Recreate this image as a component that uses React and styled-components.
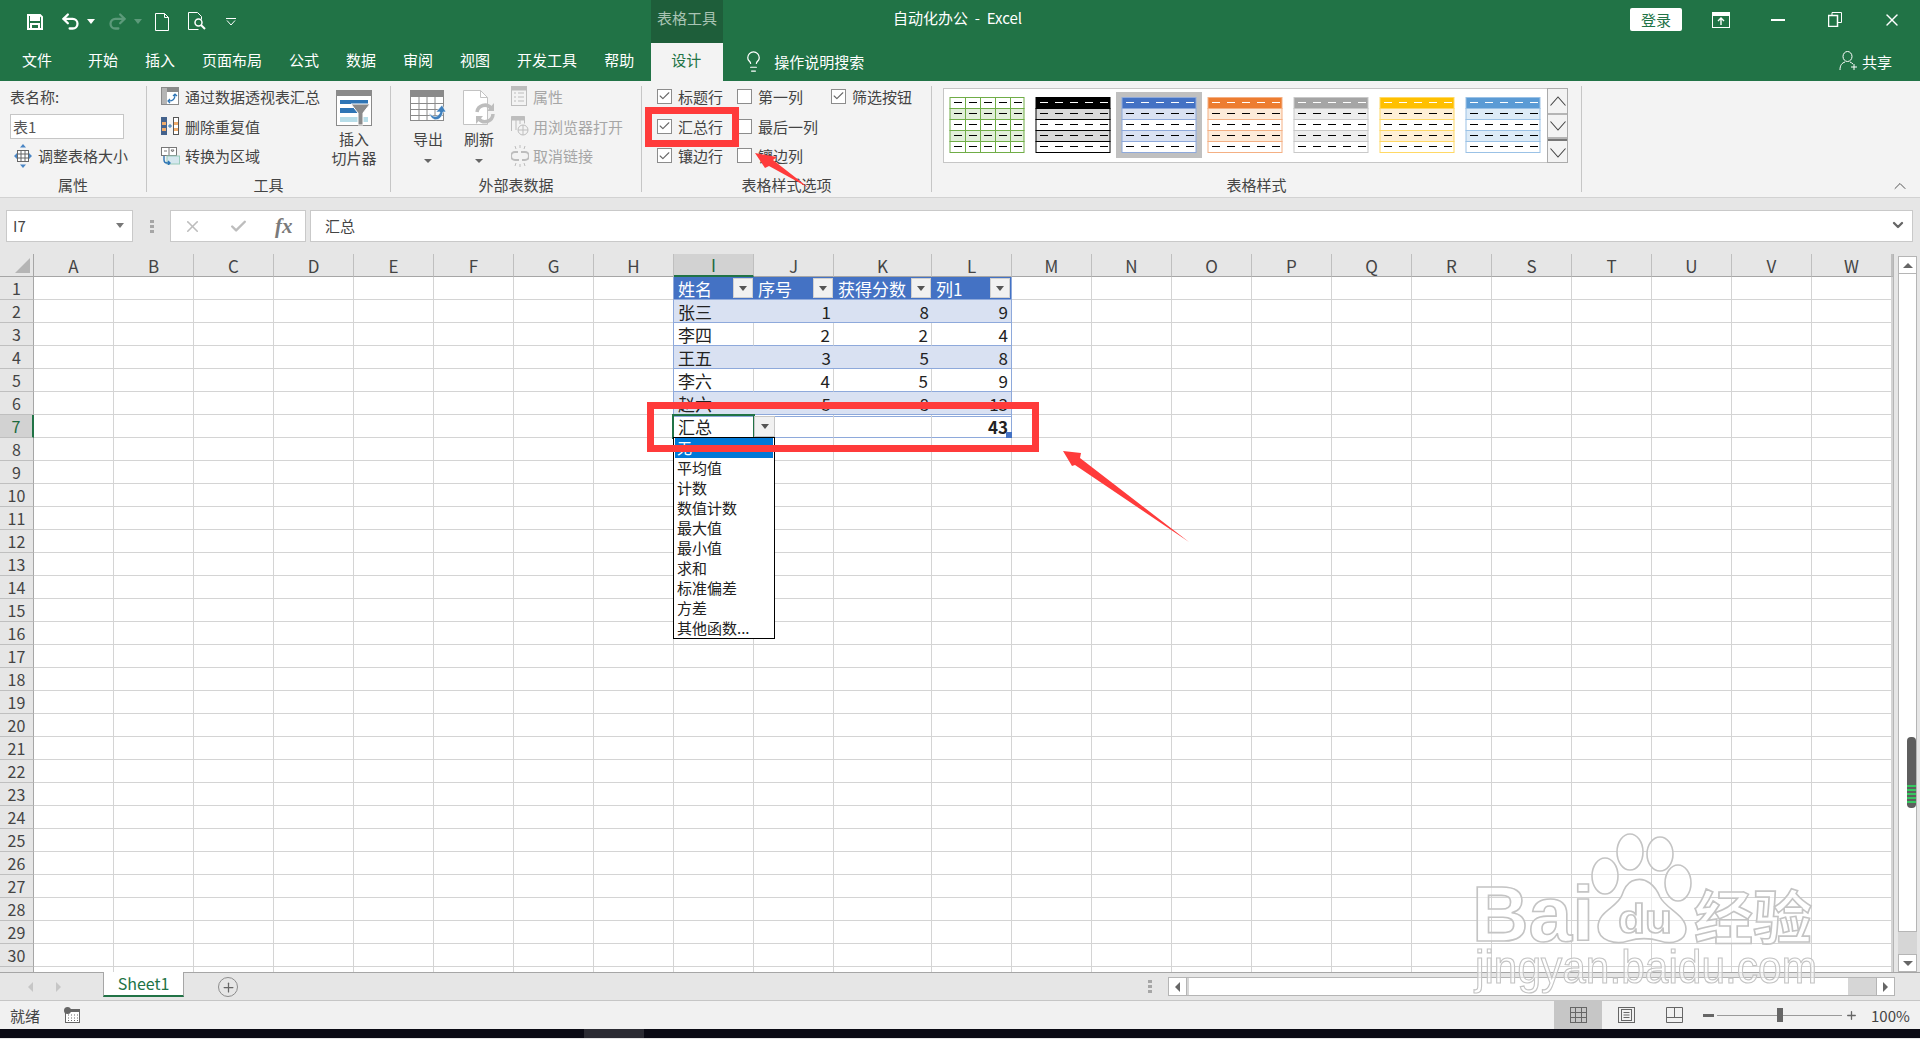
import React from 'react';
import styled, { createGlobalStyle, css } from 'styled-components';
import { Undo2, Redo2, Lightbulb, X, Check, ChevronUp, ChevronDown, Plus } from 'lucide-react';

const GREEN = '#217346';
const FONT = '"Noto Sans CJK SC", "Noto Sans", sans-serif';

const GlobalStyle = createGlobalStyle`
  html, body {
    margin: 0;
    padding: 0;
    width: 1920px;
    height: 1039px;
    overflow: hidden;
    background: #e6e6e6;
  }
  body {
    font-family: ${FONT};
    font-size: 15px;
    color: #444;
  }
  * { box-sizing: border-box; }
`;

const Page = styled.div`
  position: relative;
  width: 1920px;
  height: 1039px;
  display: flex;
  flex-direction: column;
  overflow: hidden;
`;

/* title bar */
const TitleBar = styled.div`
  display: flex;
  align-items: center;
  height: 43px;
  background: ${GREEN};
  color: #fff;
`;

const QuickAccess = styled.div`
  display: flex;
  align-items: center;
  width: 651px;
  height: 43px;
  padding-left: 27px;
  flex: none;
`;

const QuickIcon = styled.span`
  display: flex;
  align-items: center;
  margin-left: ${p => p.$gap || 0}px;
  color: ${p => (p.$dim ? '#5c9a7a' : '#fff')};
`;

const ContextTab = styled.div`
  width: 72px;
  height: 43px;
  flex: none;
  background: #1e5e3a;
  color: #a9c4b4;
  line-height: 36px;
  text-align: center;
`;

const WindowTitle = styled.div`
  margin-left: 170px;
  white-space: pre;
  line-height: 35px;
  height: 43px;
`;

const WindowControls = styled.div`
  margin-left: auto;
  display: flex;
  align-items: center;
  height: 43px;
`;

const LoginButton = styled.div`
  width: 52px;
  height: 23px;
  margin-right: 10px;
  margin-top: -4px;
  border-radius: 2px;
  background: #fff;
  color: ${GREEN};
  text-align: center;
  line-height: 23px;
`;

const WindowButton = styled.div`
  width: 57px;
  display: flex;
  justify-content: center;
  margin-top: -4px;
`;

/* ribbon tabs */
const TabBar = styled.div`
  display: flex;
  align-items: stretch;
  height: 38px;
  background: ${GREEN};
  color: #fff;
`;

const FileTab = styled.div`
  width: 74px;
  text-align: center;
  line-height: 34px;
`;

const TabList = styled.div`
  display: flex;
  gap: 27px;
  margin-left: 14px;
  line-height: 34px;
`;

const DesignTab = styled.div`
  width: 72px;
  margin-left: 17px;
  padding-right: 2px;
  background: #f3f3f3;
  color: ${GREEN};
  text-align: center;
  line-height: 34px;
`;

const SearchHint = styled.div`
  display: flex;
  align-items: center;
  gap: 9px;
  margin-left: 19px;
  height: 36px;
`;

const ShareButton = styled.div`
  margin-left: auto;
  margin-right: 28px;
  display: flex;
  align-items: center;
  gap: 3px;
  height: 36px;
`;

/* ribbon */
const Ribbon = styled.div`
  display: flex;
  position: relative;
  height: 117px;
  background: #f3f3f3;
  border-bottom: 1px solid #d2d2d2;
`;

const Group = styled.div`
  width: ${p => p.$width}px;
  flex: none;
  display: flex;
  flex-direction: column;
`;

const GroupBody = styled.div`
  height: 93px;
  display: flex;
  padding-left: ${p => p.$pad || 0}px;
`;

const GroupLabel = styled.div`
  height: 22px;
  line-height: 21px;
  text-align: center;
  color: #444;
  font-size: 15px;
`;

const GroupDivider = styled.div`
  width: 1px;
  height: 106px;
  margin-top: 5px;
  flex: none;
  background: #c6c6c6;
`;

const CommandList = styled.div`
  display: grid;
  grid-template-rows: 30px 30px 29px;
  width: ${p => p.$width}px;
  flex: none;
`;

const Command = styled.div`
  display: flex;
  align-items: center;
  gap: ${p => p.$gap ?? 6}px;
  white-space: nowrap;
  color: ${p => (p.$disabled ? '#a6a6a6' : '#444')};
  padding-left: ${p => p.$pad || 0}px;
`;

const NameInput = styled.div`
  align-self: center;
  width: 114px;
  height: 25px;
  background: #fff;
  border: 1px solid #c6c6c6;
  padding-left: 2px;
  line-height: 23px;
  color: #555;
`;

const LargeCommand = styled.div`
  width: ${p => p.$width || 50}px;
  margin-right: ${p => p.$after || 0}px;
  flex: none;
  display: flex;
  flex-direction: column;
  align-items: center;
  padding-top: 9px;
  line-height: 19px;
  text-align: center;
  color: #444;
  svg { margin-bottom: 3px; flex: none; }
`;

const CaretDown = styled.span`
  width: 0;
  height: 0;
  margin-top: 11px;
  border-left: 4px solid transparent;
  border-right: 4px solid transparent;
  border-top: 4px solid #666;
`;

const OptionsGrid = styled.div`
  display: grid;
  grid-template-columns: 80px 94px 90px;
  grid-template-rows: 30px 30px 29px;
`;

const Option = styled.label`
  display: flex;
  align-items: center;
  gap: 6px;
  white-space: nowrap;
`;

const CheckBox = styled.span`
  width: 15px;
  height: 15px;
  flex: none;
  display: flex;
  align-items: center;
  justify-content: center;
  background: #fff;
  border: 1px solid #8c8c8c;
  color: #666;
`;

const Gallery = styled.div`
  display: flex;
  width: 604px;
  height: 75px;
  margin: 7px 0 0 11px;
  padding: 3px 0 0 0;
  background: #fff;
  border: 1px solid #c6c6c6;
  border-right: none;
  flex: none;
`;

const Swatch = styled.div`
  width: 86px;
  height: 66px;
  padding: 5px;
  background: ${p => (p.$selected ? '#c0c0c0' : 'transparent')};
  svg { display: block; }
`;

const GalleryScroll = styled.div`
  width: 21px;
  height: 75px;
  margin-top: 7px;
  display: grid;
  grid-template-rows: 26px 24px 25px;
  border: 1px solid #ababab;
  flex: none;
`;

const GalleryButton = styled.div`
  display: flex;
  align-items: center;
  justify-content: center;
  color: #444;
  border-bottom: ${p => (p.$line ? `2px solid ${p.$line}` : 'none')};
  border-top: ${p => (p.$topLine ? `2px solid ${p.$topLine}` : 'none')};
`;

const CollapseRibbon = styled.div`
  position: absolute;
  right: 10px;
  bottom: 1px;
  color: #555;
  display: flex;
`;

/* formula bar */
const FormulaBar = styled.div`
  display: flex;
  height: 56px;
  padding: 12px 0 0 6px;
  background: #e6e6e6;
`;

const BarBox = styled.div`
  height: 32px;
  display: flex;
  align-items: center;
  background: #fff;
  border: 1px solid #c9c9c9;
  flex: none;
`;

const NameBox = styled(BarBox)`
  width: 127px;
  padding: 0 8px 2px 6px;
  justify-content: space-between;
  color: #444;
`;

const SmallCaret = styled.span`
  width: 0;
  height: 0;
  border-left: 4px solid transparent;
  border-right: 4px solid transparent;
  border-top: 5px solid ${p => p.$color || '#777'};
`;

const BarDots = styled.div`
  width: 37px;
  display: flex;
  flex-direction: column;
  align-items: center;
  justify-content: center;
  gap: 2px;
  flex: none;
  height: 32px;
  span { width: 4px; height: 3px; background: #a6a6a6; }
`;

const FormulaButtons = styled(BarBox)`
  width: 136px;
  gap: 27px;
  padding-left: 12px;
  color: #bdbdbd;
`;

const Fx = styled.span`
  font-family: "Liberation Serif", serif;
  font-style: italic;
  font-weight: 700;
  font-size: 21px;
  line-height: 24px;
  color: #7a7a7a;
`;

const FormulaInput = styled(BarBox)`
  width: 1603px;
  margin-left: 4px;
  padding: 0 6px 2px 14px;
  justify-content: space-between;
`;

/* sheet */
const SheetArea = styled.div`
  display: flex;
  height: 719px;
  background: #e6e6e6;
  border-bottom: 1px solid #a6a6a6;
  overflow: hidden;
`;

const SheetGrid = styled.div`
  width: 1894px;
  flex: none;
  background: #fff;
  border-right: 1px solid #b5b5b5;
`;

const GridRow = styled.div`
  display: grid;
  grid-template-columns: 34px repeat(10, 80px) 98px repeat(12, 80px) 1px;
  grid-template-rows: 23px;
  height: 23px;
`;

const headerCell = css`
  display: flex;
  align-items: center;
  justify-content: center;
  background: ${p => (p.$active ? '#d2d2d2' : '#e6e6e6')};
  color: ${p => (p.$active ? '#1c6a3e' : '#444')};
  font-size: 16px;
  min-height: 0;
`;

const ColumnHeader = styled.div`
  ${headerCell}
  position: relative;
  font-size: 17px;
  border-right: 1px solid #bfbfbf;
  border-bottom: ${p => (p.$active ? `2px solid ${GREEN}` : '1px solid #a6a6a6')};
`;

const CornerCell = styled.div`
  background: #e6e6e6;
  border-right: 1px solid #a6a6a6;
  border-bottom: 1px solid #a6a6a6;
  display: flex;
  align-items: flex-end;
  justify-content: flex-end;
  padding: 0 3px 3px 0;
  &::before {
    content: '';
    width: 15px;
    height: 15px;
    background: #b5b5b5;
    clip-path: polygon(100% 0, 100% 100%, 0 100%);
  }
`;

const RowHeader = styled.div`
  ${headerCell}
  border-right: ${p => (p.$active ? `2px solid ${GREEN}` : '1px solid #a6a6a6')};
  border-bottom: 1px solid #bfbfbf;
`;

const Cell = styled.div`
  position: relative;
  border-right: 1px solid #d4d4d4;
  border-bottom: 1px solid #d4d4d4;
`;

const TableCell = styled.div`
  position: relative;
  display: flex;
  align-items: center;
  min-height: 0;
  padding: 0 3px 0 4px;
  font-size: 17px;
  white-space: nowrap;
  justify-content: ${p => (p.$num ? 'flex-end' : 'flex-start')};
  color: #222;
  border-bottom: 1px solid #8ea9db;
  ${p => p.$first && 'border-left: 1px solid #8ea9db; margin-left: -1px;'}
  ${p => p.$last && 'border-right: 1px solid #8ea9db;'}
  ${p => p.$variant === 'head' && css`
    background: #4472c4;
    color: #fff;
    padding: 0 1px 0 4px;
  `}
  ${p => p.$variant === 'band' && 'background: #d9e1f2;'}
  ${p => p.$variant === 'plain' && css`
    background: #fff;
    ${!p.$last && 'border-right: 1px solid #d4d4d4;'}
  `}
  ${p => p.$variant === 'total' && css`
    background: #fff;
    box-shadow: inset 0 1px 0 #fff, inset 0 2px 0 #8ea9db;
    ${!p.$last && 'border-right: 1px solid #d4d4d4;'}
  `}
  ${p => p.$selected && css`
    outline: 2px solid ${GREEN};
    outline-offset: -1px;
    z-index: 3;
  `}
`;

const FilterButton = styled.span`
  margin-left: auto;
  width: 20px;
  height: 20px;
  flex: none;
  display: flex;
  align-items: center;
  justify-content: center;
  background: #f1f1f1;
  border: 1px solid #d0d0d0;
`;

const CellDropButton = styled.span`
  position: absolute;
  left: 100%;
  top: 1px;
  margin-left: 1px;
  width: 21px;
  height: 21px;
  display: flex;
  align-items: center;
  justify-content: center;
  background: #f1f1f1;
  border: 1px solid #c6c6c6;
`;

const TotalMenu = styled.div`
  position: absolute;
  top: 22px;
  left: -1px;
  width: 102px;
  padding: 0 1px;
  background: #fff;
  border: 1px solid #000;
  z-index: 4;
`;

const TotalMenuItem = styled.div`
  height: 20px;
  line-height: 20px;
  padding-left: 2px;
  font-size: 15px;
  background: ${p => (p.$selected ? '#0078d7' : 'transparent')};
  color: ${p => (p.$selected ? '#fff' : '#222')};
`;

const FillHandle = styled.span`
  position: absolute;
  right: -1px;
  bottom: -1px;
  width: 6px;
  height: 6px;
  background: #4472c4;
`;

const ScrollColumn = styled.div`
  width: 19px;
  margin-left: 4px;
  flex: none;
  display: flex;
  flex-direction: column;
  padding-top: 2px;
`;

const ScrollButton = styled.div`
  height: ${p => p.$h || 18}px;
  display: flex;
  align-items: center;
  justify-content: center;
  flex: none;
  background: #fff;
  border: 1px solid #b5b5b5;
`;

const ScrollTrack = styled.div`
  flex: 1;
  background: #d6d6d6;
`;

const ScrollThumb = styled.div`
  position: relative;
  height: 658px;
  background: #fff;
  border: 1px solid #b5b5b5;
  border-top: none;
`;

const ScrollGap = styled.div`
  flex: 1;
  background: #d6d6d6;
`;

const PhoneMark = styled.div`
  position: absolute;
  right: 0;
  top: 463px;
  width: 9px;
  height: 71px;
  border-radius: 4px;
  background: #5e5e5e;
  padding-top: 48px;
  &::after {
    content: '';
    display: block;
    height: 20px;
    background: repeating-linear-gradient(to bottom, #35c75f 0 2px, #5e5e5e 2px 4px);
  }
`;

const Triangle = styled.span`
  width: 0;
  height: 0;
  ${p => p.$dir === 'up' && 'border-left: 5px solid transparent; border-right: 5px solid transparent; border-bottom: 5px solid #666;'}
  ${p => p.$dir === 'down' && 'border-left: 5px solid transparent; border-right: 5px solid transparent; border-top: 5px solid #666;'}
  ${p => p.$dir === 'left' && `border-top: 5px solid transparent; border-bottom: 5px solid transparent; border-right: 5px solid ${p.$color || '#666'};`}
  ${p => p.$dir === 'right' && `border-top: 5px solid transparent; border-bottom: 5px solid transparent; border-left: 5px solid ${p.$color || '#666'};`}
`;

/* sheet tabs */
const SheetBar = styled.div`
  display: flex;
  align-items: flex-start;
  height: 28px;
  background: #e6e6e6;
  border-bottom: 1px solid #c6c6c6;
`;

const SheetNav = styled.div`
  width: 103px;
  height: 27px;
  display: flex;
  align-items: center;
  gap: 23px;
  padding-left: 28px;
  flex: none;
`;

const SheetTab = styled.div`
  width: 81px;
  height: 25px;
  margin-top: -1px;
  background: #fff;
  border: 1px solid #a6a6a6;
  border-top: none;
  border-bottom: 2px solid ${GREEN};
  color: ${GREEN};
  font-size: 16px;
  text-align: center;
  line-height: 23px;
`;

const AddSheet = styled.div`
  width: 20px;
  height: 20px;
  margin: 4px 0 0 34px;
  border: 1px solid #8c8c8c;
  border-radius: 50%;
  display: flex;
  align-items: center;
  justify-content: center;
  color: #666;
`;

const HScrollDots = styled(BarDots)`
  margin-left: auto;
  height: 27px;
  width: 36px;
`;

const HScroll = styled.div`
  display: flex;
  width: 727px;
  height: 19px;
  margin: 4px 25px 0 0;
  flex: none;
  border: 1px solid #b5b5b5;
  background: #d6d6d6;
`;

const HScrollEnd = styled.div`
  width: 18px;
  flex: none;
  display: flex;
  align-items: center;
  justify-content: center;
  background: #fff;
  border-${p => p.$side}: 1px solid #b5b5b5;
`;

const HScrollThumb = styled.div`
  width: 659px;
  margin-left: 2px;
  background: #fff;
`;

/* status bar */
const StatusBar = styled.div`
  display: flex;
  align-items: center;
  height: 28px;
  padding-left: 10px;
  background: #f1f1f1;
  color: #444;
`;

const StatusMacro = styled.span`
  margin-left: 24px;
  display: flex;
`;

const ViewButtons = styled.div`
  margin-left: auto;
  display: flex;
  height: 28px;
  color: #666;
`;

const ViewButton = styled.div`
  width: 48px;
  display: flex;
  align-items: center;
  justify-content: center;
  background: ${p => (p.$active ? '#c6c6c6' : 'transparent')};
`;

const Zoom = styled.div`
  display: flex;
  align-items: center;
  width: 222px;
  padding-left: 5px;
  color: #666;
  flex: none;
`;

const ZoomTrack = styled.div`
  position: relative;
  width: 125px;
  height: 1px;
  margin: 0 3px;
  background: #9a9a9a;
`;

const ZoomThumb = styled.span`
  position: absolute;
  left: 60px;
  top: -7px;
  width: 6px;
  height: 14px;
  background: #666;
`;

const ZoomValue = styled.span`
  margin-left: 13px;
  color: #444;
`;

const Taskbar = styled.div`
  display: flex;
  height: 9px;
  background: #0a0a14;
  overflow: hidden;
`;

const TaskbarItem = styled.div`
  width: 60px;
  margin-left: 584px;
  background: #2b2b33;
`;

const TaskbarClock = styled.div`
  margin-left: 1151px;
  padding-top: 6px;
  color: #fff;
  font-size: 13px;
  line-height: 16px;
`;

/* annotations laid over the screenshot */
const TableMark = styled.div`
  position: absolute;
  left: 647px;
  top: 402px;
  width: 392px;
  height: 50px;
  border: 7px solid #ff3b3b;
  z-index: 6;
`;

const RibbonMark = styled.div`
  position: absolute;
  left: 645px;
  top: 107px;
  width: 94px;
  height: 40px;
  border: 7px solid #ff3b3b;
  z-index: 6;
`;

const ArrowLayer = styled.svg`
  position: absolute;
  left: 0;
  top: 0;
  z-index: 6;
  pointer-events: none;
`;

const Watermark = styled.svg`
  position: absolute;
  left: 1460px;
  top: 825px;
  z-index: 7;
  pointer-events: none;
`;

const COLUMNS = 'ABCDEFGHIJKLMNOPQRSTUVW'.split('');
const ROWS = Array.from({ length: 31 }, (_, i) => i + 1);

const TABLE_START = 8;
const TABLE_END = 11;
const TABLE_ROWS = {
  1: { variant: 'head', cells: ['姓名', '序号', '获得分数', '列1'] },
  2: { variant: 'band', cells: ['张三', 1, 8, 9] },
  3: { variant: 'plain', cells: ['李四', 2, 2, 4] },
  4: { variant: 'band', cells: ['王五', 3, 5, 8] },
  5: { variant: 'plain', cells: ['李六', 4, 5, 9] },
  6: { variant: 'band', cells: ['赵六', 5, 8, 13] },
  7: { variant: 'total', cells: ['汇总', '', '', '43'] },
};

const TOTAL_OPTIONS = ['无', '平均值', '计数', '数值计数', '最大值', '最小值', '求和', '标准偏差', '方差', '其他函数...'];

const SWATCHES = [
  { head: '#fff', band: '#e2efda', line: '#70ad47', grid: true },
  { head: '#000', band: '#d9d9d9', line: '#000' },
  { head: '#4472c4', band: '#d9e1f2', line: '#8ea9db', selected: true },
  { head: '#ed7d31', band: '#fdebd9', line: '#f4b084' },
  { head: '#a5a5a5', band: '#ededed', line: '#c9c9c9' },
  { head: '#ffc000', band: '#fff0d6', line: '#ffd966' },
  { head: '#5b9bd5', band: '#ddebf7', line: '#9bc2e6' },
];

const SwatchIcon = ({ head, band, line, grid }) => (
  <svg width="76" height="56" viewBox="0 0 76 56">
    {[0, 1, 2, 3, 4].map(r => (
      <g key={r}>
        <rect x="1" y={r * 11 + 0.5} width="74" height="11" fill={r === 0 ? head : r % 2 ? band : '#fff'} stroke={line} />
        {[0, 1, 2, 3, 4].map(c => (
          <rect key={c} x={c * 15 + 5} y={r * 11 + 5} width="8" height="1" fill={r === 0 && head !== '#fff' ? '#fff' : '#000'} />
        ))}
      </g>
    ))}
    {grid && [16, 31, 46, 61].map(x => <rect key={x} x={x} y="0" width="1" height="56" fill={line} />)}
  </svg>
);

const GalleryChevron = ({ up }) => (
  <svg width="16" height="10" viewBox="0 0 16 10" fill="none" stroke="#444" strokeWidth="1.100">
    <path d={up ? 'M.5 9.500L8 1l7.500 8.500' : 'M.5.500L8 9l7.500-8.500'} />
  </svg>
);

const SaveIcon = () => (
  <svg width="16" height="16" viewBox="0 0 16 16" fill="none" stroke="#fff" strokeWidth="2">
    <path d="M1 1h12l2 2v12H1z" />
    <path d="M4 1v5h8V1" fill="#fff" />
    <path d="M4 15v-5h8v5" />
  </svg>
);

const NewFileIcon = () => (
  <svg width="16" height="18" viewBox="0 0 16 18" fill="none" stroke="#fff">
    <path d="M1.500.5h9l4 4v13h-13z" />
    <path d="M10.500.5v4h4" />
  </svg>
);

const PreviewIcon = () => (
  <svg width="20" height="19" viewBox="0 0 20 19" fill="none" stroke="#fff">
    <path d="M1.500.5h9l4 4v3M1.500.5v17h10" />
    <circle cx="11.500" cy="10.500" r="3.500" strokeWidth="1.500" />
    <path d="M14 13l4 4" strokeWidth="2" />
  </svg>
);

const CustomizeIcon = () => (
  <svg width="10" height="8" viewBox="0 0 10 8" fill="none" stroke="#fff">
    <path d="M0 .5h10M1 2.500l4 4.500 4-4.500" />
  </svg>
);

const RibbonDisplayIcon = () => (
  <svg width="18" height="16" viewBox="0 0 18 16" fill="none" stroke="#fff">
    <rect x=".5" y=".5" width="17" height="15" />
    <rect x=".5" y=".5" width="17" height="3" fill="#fff" />
    <path d="M9 13V6M6 9l3-3 3 3" strokeWidth="1.400" />
  </svg>
);

const RestoreIcon = () => (
  <svg width="14" height="15" viewBox="0 0 14 15" fill="none" stroke="#fff">
    <rect x=".5" y="3.500" width="9" height="11" strokeWidth="1.500" />
    <path d="M4 3V.5h9.500v10H10" />
  </svg>
);

const ShareIcon = () => (
  <svg width="20" height="20" viewBox="0 0 20 20" fill="none" stroke="#fff">
    <ellipse cx="8.500" cy="5.500" rx="4.500" ry="5" />
    <path d="M1 19c0-5 2-7 5-8M11 11c1 .5 2 1 3 2" />
    <path d="M15 13v6M12 16h6" />
  </svg>
);

const PivotIcon = () => (
  <svg width="18" height="18" viewBox="0 0 18 18">
    <rect x=".5" y=".5" width="17" height="17" fill="#fff" stroke="#8a8a8a" />
    <rect x="1" y="1" width="16" height="4" fill="#8a8a8a" />
    <rect x="1" y="1" width="5" height="16" fill="#b5b5b5" />
    <path d="M8 14c4 0 6-2 6-6M12 9l2-2 2 2M9 12l-2 2 2 2" fill="none" stroke="#2f75b5" strokeWidth="1.200" />
  </svg>
);

const DuplicatesIcon = () => (
  <svg width="18" height="18" viewBox="0 0 18 18">
    <rect x="0" y="0" width="6" height="18" fill="#44628c" />
    <rect x="1" y="5" width="4" height="3" fill="#f0ab6a" />
    <rect x="1" y="11" width="4" height="3" fill="#f0ab6a" />
    <rect x="12.500" y=".5" width="5" height="17" fill="#fff" stroke="#555" />
    <rect x="13" y="5" width="4" height="3" fill="#f0ab6a" />
    <rect x="13" y="11" width="4" height="3" fill="#f0ab6a" />
    <path d="M7 9h4M9 7v4" stroke="#2f75b5" />
  </svg>
);

const ConvertIcon = () => (
  <svg width="19" height="18" viewBox="0 0 19 18" fill="none">
    <rect x=".5" y=".5" width="15" height="8" fill="#fff" stroke="#777" />
    <path d="M8 .5v8" stroke="#777" />
    <path d="M3 4h3M10 3l1.500 2 1.500-2z" stroke="#777" />
    <rect x="6" y="9" width="12.500" height="8" fill="#d5e7ee" stroke="#9cb" />
    <path d="M3 9v4c0 2 1 3 3 3h3M7 14l2 2-2 2" stroke="#2f75b5" strokeWidth="1.400" />
  </svg>
);

const ResizeIcon = () => (
  <svg width="18" height="24" viewBox="0 0 18 24">
    <rect x="3.500" y="6.500" width="11" height="11" fill="#fff" stroke="#666" />
    <path d="M3.500 10h11M3.500 14h11M7 6.500v11M11 6.500v11" stroke="#666" />
    <path d="M9 0l3 3.500H6zM9 24l3-3.500H6zM0 12l3-3v6zM18 12l-3-3v6z" fill="#4a86c5" />
  </svg>
);

const SlicerIcon = () => (
  <svg width="36" height="36" viewBox="0 0 36 36">
    <rect x=".5" y=".5" width="35" height="35" fill="#fff" stroke="#8a8a8a" />
    <rect x="0" y="0" width="36" height="6" fill="#8a8a8a" />
    <rect x="4" y="10" width="28" height="4" fill="#2f75b5" />
    <rect x="4" y="18" width="20" height="5" fill="#2f75b5" />
    <rect x="4" y="27" width="28" height="5" fill="#b7dde8" />
    <path d="M15 14h19l-7 9v12h-5V23z" fill="#8a8a8a" stroke="#fff" />
  </svg>
);

const ExportIcon = () => (
  <svg width="36" height="36" viewBox="0 0 36 36">
    <rect x=".5" y=".5" width="33" height="30" fill="#fff" stroke="#8a8a8a" />
    <rect x="0" y="0" width="34" height="7" fill="#8a8a8a" />
    <path d="M0 13.500h34M0 19.500h34M0 25.500h34M9 7v24M17 7v24M25 7v24" stroke="#8a8a8a" />
    <path d="M19 23c6 6 10 3 11-1l-4 0 6-7 4 7h-3c-1 8-10 12-14 1z" fill="#3f80bd" stroke="#fff" strokeWidth=".6" />
  </svg>
);

const RefreshIcon = () => (
  <svg width="34" height="36" viewBox="0 0 34 36">
    <path d="M1.500.5h17l7 7v27h-24z" fill="#fff" stroke="#c3c3c3" />
    <path d="M18.500.5v7h7" fill="none" stroke="#c3c3c3" />
    <path d="M15 22a8 8 0 0 1 14-4M31 24a8 8 0 0 1-14 5" fill="none" stroke="#bdbdbd" strokeWidth="3.500" />
    <path d="M32 13v8h-7zM14 34v-8h7z" fill="#bdbdbd" />
  </svg>
);

const PropertiesIcon = () => (
  <svg width="17" height="20" viewBox="0 0 17 20" fill="none" stroke="#bdbdbd">
    <rect x=".5" y=".5" width="15" height="19" />
    <rect x="1" y="1" width="14" height="3" fill="#bdbdbd" />
    <path d="M3 7h2M7 7h6M3 11h2M7 11h6M3 15h2M7 15h6" />
  </svg>
);

const BrowserIcon = () => (
  <svg width="18" height="20" viewBox="0 0 18 20" fill="none" stroke="#bdbdbd">
    <path d="M.5 15V.5h13v7" />
    <rect x="1" y="1" width="12" height="3" fill="#bdbdbd" />
    <path d="M5 4v10M9 4v4" />
    <circle cx="12" cy="14" r="5" fill="#f3f3f3" />
    <path d="M7 14h10M12 9v10" />
  </svg>
);

const UnlinkIcon = () => (
  <svg width="18" height="22" viewBox="0 0 18 22" fill="none" stroke="#bdbdbd" strokeWidth="2">
    <path d="M7 7H4a4 4 0 0 0 0 8h4M11 15h3a4 4 0 0 0 0-8h-4" />
    <path d="M9 0v3M9 19v3M4 1l1 3M14 1l-1 3M4 21l1-3M14 21l-1-3" strokeWidth="1" />
  </svg>
);

const MacroIcon = () => (
  <svg width="16" height="16" viewBox="0 0 16 16">
    <rect x="1.500" y="2.500" width="14" height="13" fill="#fff" stroke="#666" />
    <rect x="1" y="2" width="15" height="3" fill="#666" />
    <path d="M4 8h1M7 8h1M10 8h1M13 8h1M4 11h1M7 11h1M10 11h1M13 11h1M4 13.500h1M7 13.500h1M10 13.500h1M13 13.500h1" stroke="#666" />
    <circle cx="3.500" cy="3.500" r="3.500" fill="#666" />
  </svg>
);

const NormalViewIcon = () => (
  <svg width="17" height="16" viewBox="0 0 17 16" fill="none" stroke="currentColor">
    <rect x=".5" y=".5" width="16" height="15" />
    <path d="M.5 5.500h16M.5 10.500h16M5.500.5v15M11.500.5v15" />
  </svg>
);

const PageViewIcon = () => (
  <svg width="17" height="16" viewBox="0 0 17 16" fill="none" stroke="currentColor">
    <rect x=".5" y=".5" width="16" height="15" />
    <rect x="3.500" y="2.500" width="10" height="11" />
    <path d="M5.500 5.500h6M5.500 8h6M5.500 10.500h6" />
  </svg>
);

const BreakViewIcon = () => (
  <svg width="17" height="16" viewBox="0 0 17 16" fill="none" stroke="currentColor">
    <path d="M.5.500h16v15H.5zM.5 10.500h16M8.500.5v10" />
  </svg>
);

const Box = ({ checked }) => (
  <CheckBox>{checked && <Check size={14} strokeWidth={2} />}</CheckBox>
);

function renderTableCell(row, col) {
  const spec = TABLE_ROWS[row];
  const value = spec.cells[col - TABLE_START];
  const isHead = spec.variant === 'head';
  const selected = row === 7 && col === TABLE_START;
  const bold = row === 7 && col === TABLE_END;
  return (
    <TableCell
      key={col}
      $variant={spec.variant}
      $num={!isHead && col !== TABLE_START}
      $first={col === TABLE_START}
      $last={col === TABLE_END}
      $selected={selected}
    >
      {bold ? <b>{value}</b> : value}
      {isHead && (
        <FilterButton>
          <SmallCaret $color="#555" />
        </FilterButton>
      )}
      {selected && (
        <>
          <CellDropButton>
            <SmallCaret $color="#555" />
          </CellDropButton>
          <TotalMenu>
            {TOTAL_OPTIONS.map((option, i) => (
              <TotalMenuItem key={option} $selected={i === 0}>{option}</TotalMenuItem>
            ))}
          </TotalMenu>
        </>
      )}
      {bold && <FillHandle />}
    </TableCell>
  );
}

export default function App() {
  return (
    <Page>
      <GlobalStyle />

      <TitleBar>
        <QuickAccess>
          <QuickIcon><SaveIcon /></QuickIcon>
          <QuickIcon $gap={17}><Undo2 size={21} strokeWidth={2.6} /></QuickIcon>
          <QuickIcon $gap={6}><SmallCaret $color="#fff" /></QuickIcon>
          <QuickIcon $gap={12} $dim><Redo2 size={21} strokeWidth={2.6} /></QuickIcon>
          <QuickIcon $gap={6}><SmallCaret $color="#5c9a7a" /></QuickIcon>
          <QuickIcon $gap={12}><NewFileIcon /></QuickIcon>
          <QuickIcon $gap={17}><PreviewIcon /></QuickIcon>
          <QuickIcon $gap={19}><CustomizeIcon /></QuickIcon>
        </QuickAccess>
        <ContextTab>表格工具</ContextTab>
        <WindowTitle>自动化办公  -  Excel</WindowTitle>
        <WindowControls>
          <LoginButton>登录</LoginButton>
          <WindowButton><RibbonDisplayIcon /></WindowButton>
          <WindowButton><svg width="14" height="2"><rect width="14" height="2" fill="#fff" /></svg></WindowButton>
          <WindowButton><RestoreIcon /></WindowButton>
          <WindowButton><X size={20} strokeWidth={1.7} /></WindowButton>
        </WindowControls>
      </TitleBar>

      <TabBar>
        <FileTab>文件</FileTab>
        <TabList>
          {['开始', '插入', '页面布局', '公式', '数据', '审阅', '视图', '开发工具', '帮助'].map(tab => (
            <span key={tab}>{tab}</span>
          ))}
        </TabList>
        <DesignTab>设计</DesignTab>
        <SearchHint>
          <Lightbulb size={23} strokeWidth={1.3} />
          操作说明搜索
        </SearchHint>
        <ShareButton>
          <ShareIcon />
          共享
        </ShareButton>
      </TabBar>

      <Ribbon>
        <Group $width={146}>
          <GroupBody $pad={10}>
            <CommandList $width={130}>
              <Command>表名称:</Command>
              <NameInput>表1</NameInput>
              <Command $pad={4} $gap={6}><ResizeIcon />调整表格大小</Command>
            </CommandList>
          </GroupBody>
          <GroupLabel>属性</GroupLabel>
        </Group>
        <GroupDivider />

        <Group $width={243}>
          <GroupBody $pad={14}>
            <CommandList $width={168}>
              <Command><PivotIcon />通过数据透视表汇总</Command>
              <Command><DuplicatesIcon />删除重复值</Command>
              <Command $gap={5}><ConvertIcon />转换为区域</Command>
            </CommandList>
            <LargeCommand>
              <SlicerIcon />
              插入<br />切片器
            </LargeCommand>
          </GroupBody>
          <GroupLabel>工具</GroupLabel>
        </Group>
        <GroupDivider />

        <Group $width={250}>
          <GroupBody $pad={12}>
            <LargeCommand $after={1}>
              <ExportIcon />
              导出
              <CaretDown />
            </LargeCommand>
            <LargeCommand $after={7}>
              <RefreshIcon />
              刷新
              <CaretDown />
            </LargeCommand>
            <CommandList $width={130}>
              <Command $disabled $gap={5}><PropertiesIcon />属性</Command>
              <Command $disabled $gap={4}><BrowserIcon />用浏览器打开</Command>
              <Command $disabled $gap={4}><UnlinkIcon />取消链接</Command>
            </CommandList>
          </GroupBody>
          <GroupLabel>外部表数据</GroupLabel>
        </Group>
        <GroupDivider />

        <Group $width={289}>
          <GroupBody $pad={15}>
            <OptionsGrid>
              <Option><Box checked />标题行</Option>
              <Option><Box />第一列</Option>
              <Option><Box checked />筛选按钮</Option>
              <Option><Box checked />汇总行</Option>
              <Option><Box />最后一列</Option>
              <span />
              <Option><Box checked />镶边行</Option>
              <Option><Box />镶边列</Option>
            </OptionsGrid>
          </GroupBody>
          <GroupLabel>表格样式选项</GroupLabel>
        </Group>
        <GroupDivider />

        <Group $width={649}>
          <GroupBody>
            <Gallery>
              {SWATCHES.map(swatch => (
                <Swatch key={swatch.head} $selected={swatch.selected}>
                  <SwatchIcon {...swatch} />
                </Swatch>
              ))}
            </Gallery>
            <GalleryScroll>
              <GalleryButton $line="#b5b5b5"><GalleryChevron up /></GalleryButton>
              <GalleryButton $line="#b5b5b5"><GalleryChevron /></GalleryButton>
              <GalleryButton $topLine="#777"><GalleryChevron /></GalleryButton>
            </GalleryScroll>
          </GroupBody>
          <GroupLabel>表格样式</GroupLabel>
        </Group>
        <GroupDivider />
        <CollapseRibbon><ChevronUp size={20} strokeWidth={1.2} /></CollapseRibbon>
      </Ribbon>

      <FormulaBar>
        <NameBox>I7<SmallCaret /></NameBox>
        <BarDots><span /><span /><span /></BarDots>
        <FormulaButtons>
          <X size={19} strokeWidth={2} />
          <Check size={19} strokeWidth={3} />
          <Fx>fx</Fx>
        </FormulaButtons>
        <FormulaInput>汇总<ChevronDown size={16} strokeWidth={3.5} color="#666" /></FormulaInput>
      </FormulaBar>

      <SheetArea>
        <SheetGrid>
          <GridRow>
            <CornerCell />
            {COLUMNS.map(col => <ColumnHeader key={col} $active={col === 'I'}>{col}</ColumnHeader>)}
            <ColumnHeader />
          </GridRow>
          {ROWS.map(row => (
            <GridRow key={row}>
              <RowHeader $active={row === 7}>{row}</RowHeader>
              {COLUMNS.map((col, i) => (
                TABLE_ROWS[row] && i >= TABLE_START && i <= TABLE_END
                  ? renderTableCell(row, i)
                  : <Cell key={col} />
              ))}
              <Cell />
            </GridRow>
          ))}
        </SheetGrid>
        <ScrollColumn>
          <ScrollButton><Triangle $dir="up" /></ScrollButton>
          <ScrollTrack>
            <ScrollThumb><PhoneMark /></ScrollThumb>
          </ScrollTrack>
          <ScrollButton><Triangle $dir="down" /></ScrollButton>
        </ScrollColumn>
      </SheetArea>

      <SheetBar>
        <SheetNav>
          <Triangle $dir="left" $color="#c6c6c6" />
          <Triangle $dir="right" $color="#c6c6c6" />
        </SheetNav>
        <SheetTab>Sheet1</SheetTab>
        <AddSheet><Plus size={15} strokeWidth={2} /></AddSheet>
        <HScrollDots><span /><span /><span /></HScrollDots>
        <HScroll>
          <HScrollEnd $side="right"><Triangle $dir="left" /></HScrollEnd>
          <HScrollThumb />
          <ScrollGap />
          <HScrollEnd $side="left"><Triangle $dir="right" /></HScrollEnd>
        </HScroll>
      </SheetBar>

      <StatusBar>
        就绪
        <StatusMacro><MacroIcon /></StatusMacro>
        <ViewButtons>
          <ViewButton $active><NormalViewIcon /></ViewButton>
          <ViewButton><PageViewIcon /></ViewButton>
          <ViewButton><BreakViewIcon /></ViewButton>
        </ViewButtons>
        <Zoom>
          <svg width="11" height="3"><rect width="11" height="3" fill="#666" /></svg>
          <ZoomTrack><ZoomThumb /></ZoomTrack>
          <Plus size={13} strokeWidth={2.4} />
          <ZoomValue>100%</ZoomValue>
        </Zoom>
      </StatusBar>

      <Taskbar>
        <TaskbarItem />
        <TaskbarClock>9:00</TaskbarClock>
      </Taskbar>

      <RibbonMark />
      <TableMark />
      <ArrowLayer width="1920" height="1039" viewBox="0 0 1920 1039">
        <polygon points="755,153 777,157 773,160 809,188 769,166 765,168" fill="#ff3b3b" />
        <polygon points="1063,451 1081,453 1080,458 1189,542 1075,465 1072,466" fill="#ff3b3b" />
      </ArrowLayer>

      <Watermark width="370" height="190" viewBox="0 0 370 190">
        <defs>
          <filter id="soft" x="-5%" y="-5%" width="110%" height="110%">
            <feGaussianBlur stdDeviation="0.6" />
          </filter>
        </defs>
        <g filter="url(#soft)" fill="#fff" fillOpacity="0.55" stroke="#c4c4c4" strokeWidth="1.600">
          <text x="12" y="116" fontFamily="Liberation Sans, sans-serif" fontWeight="700" fontSize="78" textLength="122" lengthAdjust="spacingAndGlyphs">Bai</text>
          <ellipse cx="170" cy="27" rx="13" ry="18" />
          <ellipse cx="200" cy="29" rx="13" ry="17" />
          <ellipse cx="145" cy="51" rx="13" ry="18" />
          <ellipse cx="218" cy="58" rx="13" ry="18" />
          <path d="M172 56c14-6 24 6 28 16 6 12 26 18 26 32 0 12-14 16-26 12-10-3-22-3-32 0-12 4-30 0-30-14 0-16 20-20 24-32 2-6 6-12 10-14z" />
          <text x="158" y="108" fontFamily="Liberation Sans, sans-serif" fontWeight="700" fontSize="40" textLength="54" lengthAdjust="spacingAndGlyphs">du</text>
          <text x="234" y="114" fontFamily={FONT} fontWeight="700" fontSize="58" textLength="118" lengthAdjust="spacingAndGlyphs">经验</text>
          <text x="15" y="158" fontFamily="Liberation Sans, sans-serif" fontSize="47" textLength="342" lengthAdjust="spacingAndGlyphs" strokeWidth="1.200">jingyan.baidu.com</text>
        </g>
      </Watermark>
    </Page>
  );
}
